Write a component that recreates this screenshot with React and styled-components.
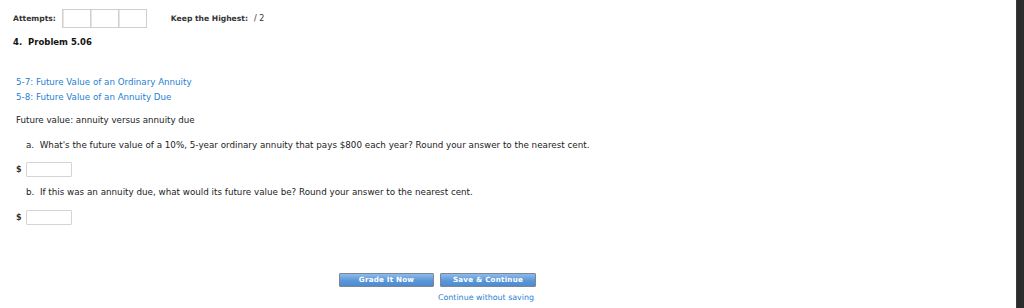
import React from 'react';
import styled, { createGlobalStyle } from 'styled-components';

const GlobalStyle = createGlobalStyle`
  body {
    margin: 0;
    background: #fff;
    font-family: "DejaVu Sans", Verdana, sans-serif;
    color: #222;
  }
`;

const Page = styled.div`
  display: flex;
  width: 1024px;
  height: 308px;
  overflow: hidden;
`;

const Main = styled.div`
  flex: 1;
  padding-left: 13px;
`;

const EdgeBar = styled.div`
  width: 7px;
  background: #2c2c2c;
  border-left: 1px solid #3a3a3a;
`;

const HeaderRow = styled.div`
  display: flex;
  align-items: center;
  height: 18px;
  margin-top: 9px;
  font-size: 7.6px;
  font-weight: bold;
  color: #333;
`;

const AttemptBoxes = styled.div`
  display: flex;
  margin-left: 6px;
`;

const AttemptBox = styled.div`
  width: 27px;
  height: 17px;
  border: 1px solid #cfcfcf;
  border-left-width: ${p => (p.$first ? '1px' : '0')};
  box-shadow: inset 1px 0 0 #e6e6e6;
`;

const KeepLabel = styled.span`
  margin-left: 24px;
  color: #333;
`;

const KeepValue = styled.span`
  margin-left: 6px;
  font-weight: normal;
  font-size: 8px;
`;

const Title = styled.div`
  margin-top: 8px;
  line-height: 14px;
  font-size: 8.5px;
  font-weight: bold;
  color: #111;
  white-space: pre;
`;

const Links = styled.div`
  margin-top: 26px;
  padding-left: 3px;
`;

const TopicLink = styled.a`
  display: block;
  line-height: 15px;
  font-size: 8.7px;
  color: #1f7fd2;
  text-decoration: none;
`;

const Intro = styled.div`
  margin-top: 8px;
  padding-left: 3px;
  line-height: 15px;
  font-size: 8.7px;
`;

const Question = styled.div`
  margin-top: ${p => p.$top}px;
  padding-left: 13px;
  line-height: 15px;
  font-size: 8.75px;
  white-space: pre;
`;

const AnswerRow = styled.div`
  display: flex;
  align-items: center;
  margin-top: ${p => p.$top}px;
  padding-left: 3px;
  height: 15px;
`;

const Dollar = styled.span`
  width: 10px;
  font-size: 8px;
  font-weight: bold;
  color: #333;
`;

const AnswerInput = styled.input`
  box-sizing: border-box;
  width: 46px;
  height: 15px;
  margin: 0;
  border: 1px solid #d4d4d4;
  border-radius: 1px;
  background: #fff;
  padding: 0;
`;

const Footer = styled.div`
  display: flex;
  gap: 4px;
  margin-top: 48px;
  margin-left: 326px;
`;

const ButtonCol = styled.div`
  display: flex;
  flex-direction: column;
  align-items: center;
`;

const ActionButton = styled.button`
  box-sizing: border-box;
  width: ${p => p.$w}px;
  height: 14px;
  margin: 0;
  padding: 0;
  border: 1px solid #7d8794;
  border-radius: 1px;
  background: linear-gradient(#8dbbe8, #5b97d8 55%, #4d8bd2);
  color: #fff;
  font-family: "DejaVu Sans", Verdana, sans-serif;
  font-size: 7.2px;
  font-weight: bold;
  line-height: 12px;
  letter-spacing: 0.2px;
`;

const SkipLink = styled.a`
  margin-top: 5px;
  margin-right: 4px;
  font-size: 7.9px;
  line-height: 12px;
  color: #1f7fd2;
  text-decoration: none;
  white-space: nowrap;
`;

export default function App() {
  return (
    <>
      <GlobalStyle />
      <Page>
        <Main>
          <HeaderRow>
            <span>Attempts:</span>
            <AttemptBoxes>
              <AttemptBox $first />
              <AttemptBox />
              <AttemptBox />
            </AttemptBoxes>
            <KeepLabel>Keep the Highest:</KeepLabel>
            <KeepValue>/ 2</KeepValue>
          </HeaderRow>
          <Title>4.  Problem 5.06</Title>
          <Links>
            <TopicLink href="#">5-7: Future Value of an Ordinary Annuity</TopicLink>
            <TopicLink href="#">5-8: Future Value of an Annuity Due</TopicLink>
          </Links>
          <Intro>Future value: annuity versus annuity due</Intro>
          <Question $top={10}>a.  What's the future value of a 10%, 5-year ordinary annuity that pays $800 each year? Round your answer to the nearest cent.</Question>
          <AnswerRow $top={9}>
            <Dollar>$</Dollar>
            <AnswerInput type="text" />
          </AnswerRow>
          <Question $top={8}>b.  If this was an annuity due, what would its future value be? Round your answer to the nearest cent.</Question>
          <AnswerRow $top={10}>
            <Dollar>$</Dollar>
            <AnswerInput type="text" />
          </AnswerRow>
          <Footer>
            <ButtonCol>
              <ActionButton $w={95}>Grade It Now</ActionButton>
            </ButtonCol>
            <ButtonCol>
              <ActionButton $w={96}>Save &amp; Continue</ActionButton>
              <SkipLink href="#">Continue without saving</SkipLink>
            </ButtonCol>
          </Footer>
        </Main>
        <EdgeBar />
      </Page>
    </>
  );
}
